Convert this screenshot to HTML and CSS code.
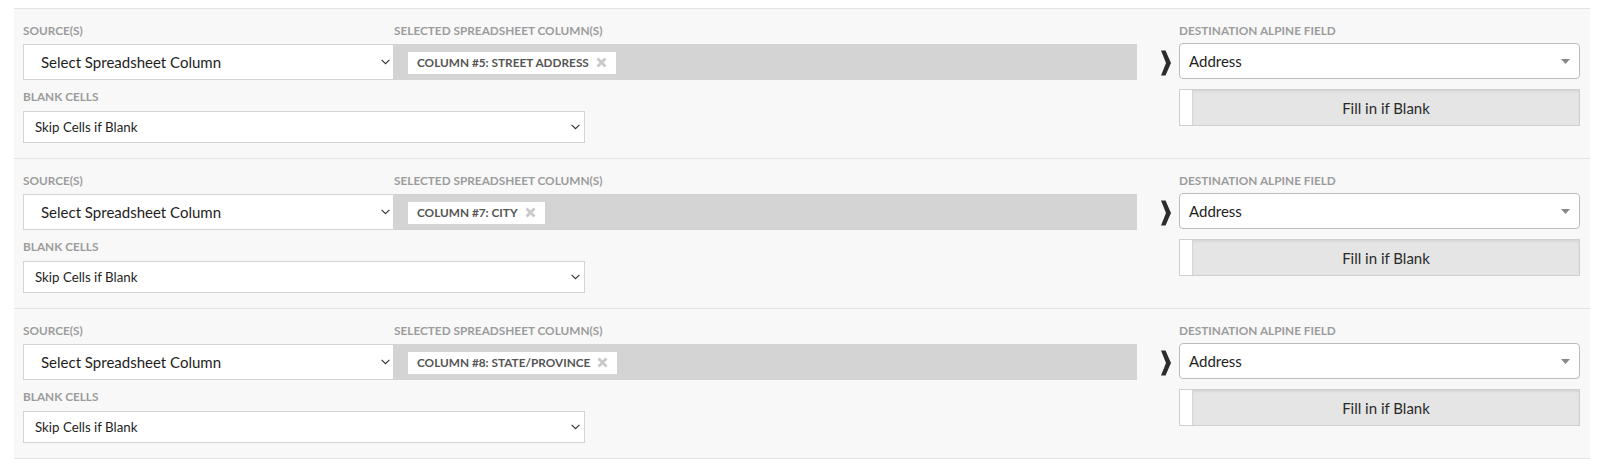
FILE: index.html
```html
<!DOCTYPE html>
<html>
<head>
<meta charset="utf-8">
<link rel="stylesheet" href="styles.css">
</head>
<body>
<div class="mapper">

  <div class="map-row">
    <div class="left">
      <div class="label-line">
        <div class="label src-label">SOURCE(S)</div>
        <div class="label">SELECTED SPREADSHEET COLUMN(S)</div>
      </div>
      <div class="control-line">
        <div class="select source-select"><span>Select Spreadsheet Column</span><svg class="caret" width="9" height="6" viewBox="0 0 9 6"><path d="M0.6 0.8 L4.5 4.7 L8.4 0.8" fill="none" stroke="#333" stroke-width="1.1"/></svg></div>
        <div class="selected-box">
          <div class="chip"><span>COLUMN #5: STREET ADDRESS</span><svg class="chip-x" width="11" height="11" viewBox="0 0 11 11"><path d="M1.5 1.5 L9.5 9.5 M9.5 1.5 L1.5 9.5" stroke="#c9c9c9" stroke-width="2.8"/></svg></div>
        </div>
      </div>
      <div class="label blank-label">BLANK CELLS</div>
      <div class="select skip-select"><span>Skip Cells if Blank</span><svg class="caret" width="9" height="6" viewBox="0 0 9 6"><path d="M0.6 0.8 L4.5 4.7 L8.4 0.8" fill="none" stroke="#333" stroke-width="1.1"/></svg></div>
    </div>
    <div class="arrow-col"><svg width="10" height="26" viewBox="0 0 10 26"><path d="M0 0.5 L4.5 0.5 L10 13 L4.5 25.5 L0 25.5 L5 13 Z" fill="#2c2c2c"/></svg></div>
    <div class="right">
      <div class="label">DESTINATION ALPINE FIELD</div>
      <div class="dest-select"><span>Address</span><svg width="9" height="5" viewBox="0 0 9 5"><path d="M0 0 L9 0 L4.5 5 Z" fill="#888"/></svg></div>
      <div class="fill-toggle"><div class="handle"></div><div class="fill-label">Fill in if Blank</div></div>
    </div>
  </div>

  <div class="map-row">
    <div class="left">
      <div class="label-line">
        <div class="label src-label">SOURCE(S)</div>
        <div class="label">SELECTED SPREADSHEET COLUMN(S)</div>
      </div>
      <div class="control-line">
        <div class="select source-select"><span>Select Spreadsheet Column</span><svg class="caret" width="9" height="6" viewBox="0 0 9 6"><path d="M0.6 0.8 L4.5 4.7 L8.4 0.8" fill="none" stroke="#333" stroke-width="1.1"/></svg></div>
        <div class="selected-box">
          <div class="chip"><span>COLUMN #7: CITY</span><svg class="chip-x" width="11" height="11" viewBox="0 0 11 11"><path d="M1.5 1.5 L9.5 9.5 M9.5 1.5 L1.5 9.5" stroke="#c9c9c9" stroke-width="2.8"/></svg></div>
        </div>
      </div>
      <div class="label blank-label">BLANK CELLS</div>
      <div class="select skip-select"><span>Skip Cells if Blank</span><svg class="caret" width="9" height="6" viewBox="0 0 9 6"><path d="M0.6 0.8 L4.5 4.7 L8.4 0.8" fill="none" stroke="#333" stroke-width="1.1"/></svg></div>
    </div>
    <div class="arrow-col"><svg width="10" height="26" viewBox="0 0 10 26"><path d="M0 0.5 L4.5 0.5 L10 13 L4.5 25.5 L0 25.5 L5 13 Z" fill="#2c2c2c"/></svg></div>
    <div class="right">
      <div class="label">DESTINATION ALPINE FIELD</div>
      <div class="dest-select"><span>Address</span><svg width="9" height="5" viewBox="0 0 9 5"><path d="M0 0 L9 0 L4.5 5 Z" fill="#888"/></svg></div>
      <div class="fill-toggle"><div class="handle"></div><div class="fill-label">Fill in if Blank</div></div>
    </div>
  </div>

  <div class="map-row">
    <div class="left">
      <div class="label-line">
        <div class="label src-label">SOURCE(S)</div>
        <div class="label">SELECTED SPREADSHEET COLUMN(S)</div>
      </div>
      <div class="control-line">
        <div class="select source-select"><span>Select Spreadsheet Column</span><svg class="caret" width="9" height="6" viewBox="0 0 9 6"><path d="M0.6 0.8 L4.5 4.7 L8.4 0.8" fill="none" stroke="#333" stroke-width="1.1"/></svg></div>
        <div class="selected-box">
          <div class="chip"><span>COLUMN #8: STATE/PROVINCE</span><svg class="chip-x" width="11" height="11" viewBox="0 0 11 11"><path d="M1.5 1.5 L9.5 9.5 M9.5 1.5 L1.5 9.5" stroke="#c9c9c9" stroke-width="2.8"/></svg></div>
        </div>
      </div>
      <div class="label blank-label">BLANK CELLS</div>
      <div class="select skip-select"><span>Skip Cells if Blank</span><svg class="caret" width="9" height="6" viewBox="0 0 9 6"><path d="M0.6 0.8 L4.5 4.7 L8.4 0.8" fill="none" stroke="#333" stroke-width="1.1"/></svg></div>
    </div>
    <div class="arrow-col"><svg width="10" height="26" viewBox="0 0 10 26"><path d="M0 0.5 L4.5 0.5 L10 13 L4.5 25.5 L0 25.5 L5 13 Z" fill="#2c2c2c"/></svg></div>
    <div class="right">
      <div class="label">DESTINATION ALPINE FIELD</div>
      <div class="dest-select"><span>Address</span><svg width="9" height="5" viewBox="0 0 9 5"><path d="M0 0 L9 0 L4.5 5 Z" fill="#888"/></svg></div>
      <div class="fill-toggle"><div class="handle"></div><div class="fill-label">Fill in if Blank</div></div>
    </div>
  </div>

</div>
</body>
</html>
```

FILE: styles.css
```css
* { box-sizing: border-box; }

html, body {
  margin: 0;
  padding: 0;
  background: #ffffff;
  font-family: Lato, "Open Sans", "Liberation Sans", sans-serif;
  color: #222;
}

.mapper {
  margin: 8px 0 0 14px;
  width: 1576px;
}

.map-row {
  display: grid;
  grid-template-columns: 1114px 42px 401px;
  padding: 16px 10px 13px 9px;
  background: #f8f8f8;
  border-top: 1px solid #e3e3e3;
  height: 150px;
}

.map-row:last-child {
  border-bottom: 1px solid #e3e3e3;
  height: 151px;
}

.label {
  font-size: 11.8px;
  font-weight: 700;
  line-height: 12px;
  color: #9c9c9c;
  white-space: nowrap;
}

.label-line {
  display: flex;
}

.src-label {
  width: 371px;
}

.control-line {
  display: flex;
  margin-top: 7px;
  height: 36px;
}

.select {
  display: flex;
  align-items: center;
  justify-content: space-between;
  background: #fff;
  border: 1px solid #d4d4d4;
}

.source-select {
  width: 370px;
  height: 36px;
  padding: 0 3px 0 17px;
  font-size: 15px;
  color: #1e1e1e;
  border-right: none;
}

.selected-box {
  flex: 1;
  background: #d4d4d4;
  padding: 7px 0 0 15px;
}

.chip {
  display: inline-flex;
  align-items: center;
  height: 22px;
  background: #fff;
  padding: 0 9px 0 9px;
  font-size: 11.8px;
  font-weight: 700;
  color: #555;
}

.chip-x {
  margin-left: 7px;
}

.blank-label {
  margin-top: 11px;
}

.skip-select {
  width: 562px;
  height: 32px;
  margin-top: 8px;
  padding: 0 4px 0 11px;
  font-size: 13.3px;
  color: #1e1e1e;
}

.arrow-col {
  display: flex;
  justify-content: flex-end;
  padding: 25px 8px 0 0;
}

.right .label {
  margin-bottom: 6px;
}

.dest-select {
  display: flex;
  align-items: center;
  justify-content: space-between;
  height: 36px;
  background: #fff;
  border: 1px solid #bcbcbc;
  border-radius: 4px;
  padding: 0 9px 0 9px;
  font-size: 15px;
  color: #1e1e1e;
}

.fill-toggle {
  display: flex;
  height: 37px;
  margin-top: 10px;
  border: 1px solid #cfcfcf;
  background: #e5e5e5;
}

.handle {
  width: 13px;
  background: #fff;
  border-right: 1px solid #d6d6d6;
}

.fill-label {
  flex: 1;
  display: flex;
  align-items: center;
  justify-content: center;
  font-size: 15px;
  color: #2a2a2a;
  box-shadow: inset 0 2px 2px rgba(0, 0, 0, 0.06);
}
```
